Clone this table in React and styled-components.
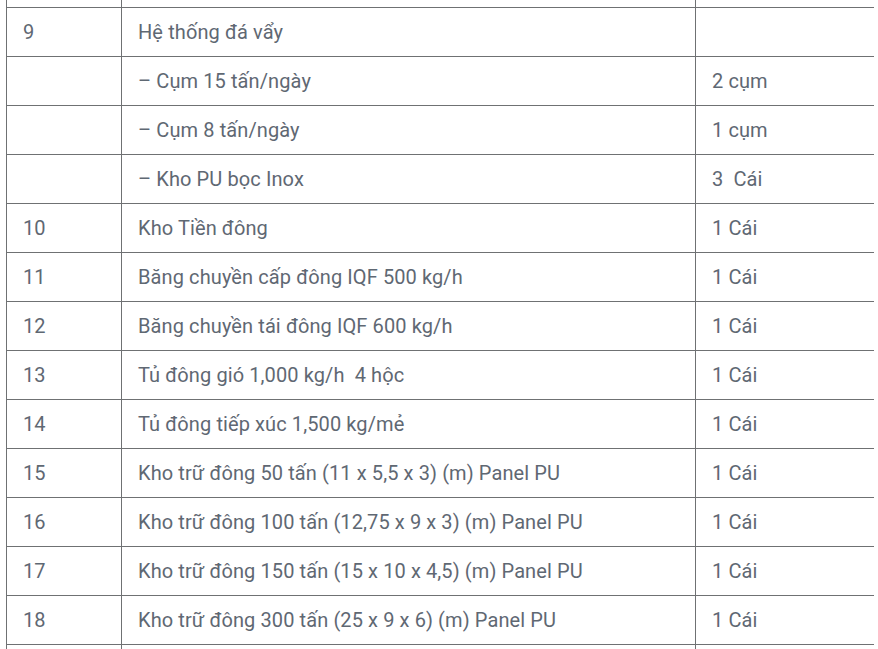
import styled, { createGlobalStyle } from "styled-components";

const GlobalStyle = createGlobalStyle`
  body {
    margin: 0;
    background: #fff;
    font-family: Roboto, "Noto Sans", sans-serif;
  }
`;

const rows = [
  ["", "", ""],
  ["9", "Hệ thống đá vẩy", ""],
  ["", "– Cụm 15 tấn/ngày", "2 cụm"],
  ["", "– Cụm 8 tấn/ngày", "1 cụm"],
  ["", "– Kho PU bọc Inox", "3  Cái"],
  ["10", "Kho Tiền đông", "1 Cái"],
  ["11", "Băng chuyền cấp đông IQF 500 kg/h", "1 Cái"],
  ["12", "Băng chuyền tái đông IQF 600 kg/h", "1 Cái"],
  ["13", "Tủ đông gió 1,000 kg/h  4 hộc", "1 Cái"],
  ["14", "Tủ đông tiếp xúc 1,500 kg/mẻ", "1 Cái"],
  ["15", "Kho trữ đông 50 tấn (11 x 5,5 x 3) (m) Panel PU", "1 Cái"],
  ["16", "Kho trữ đông 100 tấn (12,75 x 9 x 3) (m) Panel PU", "1 Cái"],
  ["17", "Kho trữ đông 150 tấn (15 x 10 x 4,5) (m) Panel PU", "1 Cái"],
  ["18", "Kho trữ đông 300 tấn (25 x 9 x 6) (m) Panel PU", "1 Cái"],
  ["", "", ""],
];

const Wrap = styled.div`
  padding-left: 6px;
  width: 868px;
  height: 649px;
  overflow: hidden;
`;

const Table = styled.table`
  border-collapse: collapse;
  width: 868px;
  table-layout: fixed;
  margin-top: -42px;
  color: #5f6873;
  font-size: 20px;
  letter-spacing: 0.1px;
`;

const Col = styled.col`
  width: ${(p) => p.$w}px;
`;

const Cell = styled.td`
  border: 1px solid #6f7173;
  height: 48px;
  padding: 0 16px;
  white-space: pre;
  vertical-align: middle;
  line-height: 24px;
`;

export default function App() {
  return (
    <>
      <GlobalStyle />
      <Wrap>
        <Table>
          <colgroup>
            <Col $w={115} />
            <Col $w={574} />
            <Col $w={179} />
          </colgroup>
          <tbody>
            {rows.map((r, i) => (
              <tr key={i}>
                {r.map((c, j) => (
                  <Cell key={j}>{c}</Cell>
                ))}
              </tr>
            ))}
          </tbody>
        </Table>
      </Wrap>
    </>
  );
}
